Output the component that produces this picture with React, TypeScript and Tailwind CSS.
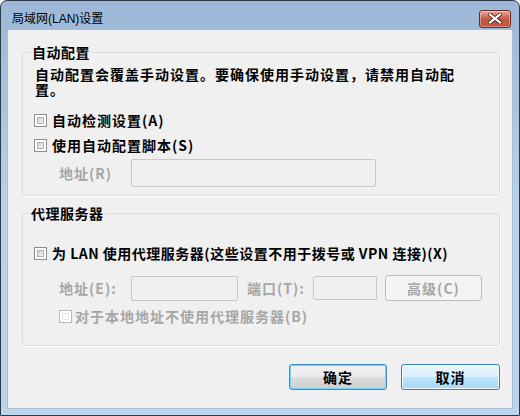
import React from "react";

const cjk = { fontFamily: '"Noto Sans CJK SC", "Noto Sans", sans-serif' };

function Check({ disabled }: { disabled?: boolean }) {
  return (
    <span
      className={
        "inline-block w-[13px] h-[13px] shrink-0 border p-[2px] bg-white " +
        (disabled ? "border-[#b8b8b8]" : "border-[#8e8f8f]")
      }
    >
      <span
        className={
          "block w-full h-full " +
          (disabled
            ? "bg-white border border-[#e4e4e4]"
            : "bg-gradient-to-br from-[#cbcfd5] to-[#f6f6f6] border border-[#aeb3b9]")
        }
      />
    </span>
  );
}

export default function App() {
  return (
    <div
      className="w-[520px] h-[416px] flex flex-col border border-[#2e3a47] rounded-t-[7px] bg-gradient-to-b from-[#9cb8d6] via-[#b9d1ea] to-[#bdd5ec] overflow-hidden"
      style={cjk}
    >
      {/* title bar */}
      <div className="h-[28px] flex items-center justify-between pl-[11px] pr-[8px] shrink-0">
        <span
          className="text-[12px] leading-[14px] text-black mt-[7px]"
          style={{ fontFamily: '"Liberation Sans", "Noto Sans CJK SC", sans-serif' }}
        >
          局域网(LAN)设置
        </span>
        <div className="mt-[7px] w-[32px] h-[18px] rounded-[3px] border border-[#6a2b27] bg-gradient-to-b from-[#e8a898] via-[#c9563f] to-[#c2553e] flex items-center justify-center shadow-[inset_0_0_0_1px_rgba(255,255,255,0.35)]">
          <svg width="14" height="11" viewBox="0 0 14 11">
            <path d="M2 1.5 L12 9.5 M12 1.5 L2 9.5" stroke="#4a2a2a" strokeWidth="4" strokeLinecap="square" />
            <path d="M2 1.5 L12 9.5 M12 1.5 L2 9.5" stroke="#ffffff" strokeWidth="2.2" strokeLinecap="square" />
          </svg>
        </div>
      </div>

      {/* client */}
      <div className="mx-[6px] mb-[6px] flex-1 bg-[#f0f0f0] border border-[#a8bed6] flex flex-col text-[14px] tracking-[1px] font-bold text-black">
        {/* group 1 */}
        <fieldset className="ml-[14px] mr-[12px] mt-[14px] border border-[#d5dfe5] rounded-[3px] pl-[11px] pb-[8px] shadow-[1px_1px_0_#ffffff]">
          <legend className="-ml-[4px] px-[2px] leading-[16px] tracking-[0.5px]">自动配置</legend>
          <div className="mt-[7px] ml-[1px] leading-[15px] whitespace-nowrap">
            <div>自动配置会覆盖手动设置。要确保使用手动设置，请禁用自动配</div>
            <div>置。</div>
          </div>
          <div className="mt-[15px] h-[16px] flex items-center gap-[5px]">
            <Check />
            <span>自动检测设置(A)</span>
          </div>
          <div className="mt-[9px] h-[16px] flex items-center gap-[5px]">
            <Check />
            <span>使用自动配置脚本(S)</span>
          </div>
          <div className="mt-[6px] flex items-center">
            <span className="ml-[25px] w-[72px] text-[#a6a6a6]">地址(R)</span>
            <div className="w-[245px] h-[28px] border border-[#c5c8cc] rounded-[2px] bg-[#f0f0f0]" />
          </div>
        </fieldset>

        {/* group 2 */}
        <fieldset className="ml-[14px] mr-[12px] mt-[9px] border border-[#d5dfe5] rounded-[3px] pl-[11px] pb-[21px] shadow-[1px_1px_0_#ffffff]">
          <legend className="-ml-[5px] px-[2px] leading-[16px] tracking-[0.5px]">代理服务器</legend>
          <div className="mt-[24px] h-[16px] flex items-center gap-[5px] whitespace-nowrap">
            <Check />
            <span className="tracking-[0.5px]">为 LAN 使用代理服务器(这些设置不用于拨号或 VPN 连接)(X)</span>
          </div>
          <div className="mt-[14px] h-[26px] flex items-center text-[#a6a6a6]">
            <span className="ml-[25px] w-[72px]">地址(E):</span>
            <div className="w-[107px] h-[25px] border border-[#c5c8cc] rounded-[2px]" />
            <span className="ml-[9px] w-[66px]">端口(T):</span>
            <div className="w-[64px] h-[24px] border border-[#c5c8cc] rounded-[2px]" />
            <div className="ml-[8px] w-[97px] h-[26px] border border-[#b8bcc0] rounded-[3px] bg-[#f4f4f4] flex items-center justify-center">
              高级(C)
            </div>
          </div>
          <div className="mt-[7px] h-[16px] flex items-center gap-[3px] ml-[25px] text-[#a6a6a6]">
            <Check disabled />
            <span>对于本地地址不使用代理服务器(B)</span>
          </div>
        </fieldset>

        {/* buttons */}
        <div className="mt-[18px] mr-[12px] flex justify-end gap-[14px]">
          <div className="w-[98px] h-[26px] rounded-[3px] border border-[#3d8fc4] shadow-[inset_0_0_0_1px_#6fd3fb] bg-[linear-gradient(to_bottom,#f2f2f2_0%,#ebebeb_50%,#dddddd_50%,#cfcfcf_100%)] flex items-center justify-center">
            确定
          </div>
          <div className="w-[99px] h-[26px] rounded-[3px] border border-[#3c7fb1] shadow-[inset_0_0_0_1px_#f4fbfe] bg-[linear-gradient(to_bottom,#eaf6fd_0%,#d9f0fc_50%,#bee6fd_50%,#a7d9f5_100%)] flex items-center justify-center">
            取消
          </div>
        </div>
      </div>
    </div>
  );
}
